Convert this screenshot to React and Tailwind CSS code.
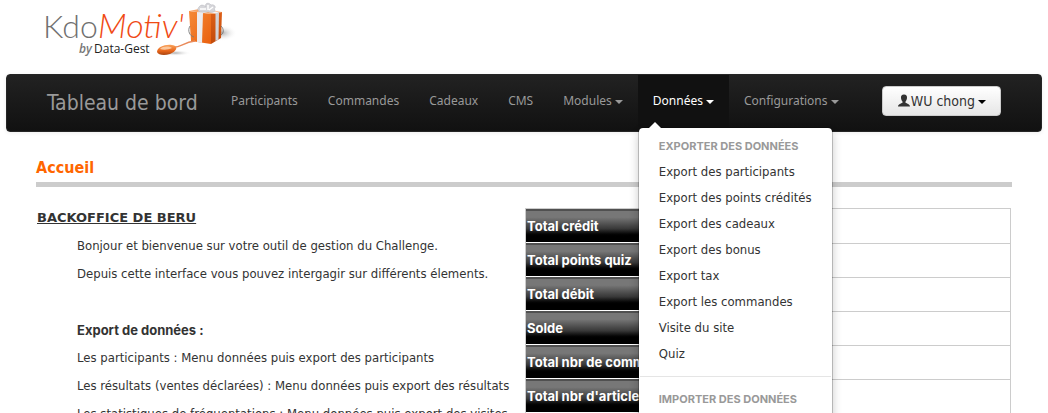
function Logo() {
  return (
    <svg width="240" height="62" viewBox="0 0 240 62" role="img" aria-label="KdoMotiv' by Data-Gest">
      <defs>
        <linearGradient id="front" x1="0" y1="0" x2="1" y2="1">
          <stop offset="0" stopColor="#f58a38" />
          <stop offset="1" stopColor="#e9600f" />
        </linearGradient>
        <linearGradient id="side" x1="0" y1="0" x2="0" y2="1">
          <stop offset="0" stopColor="#dd6018" />
          <stop offset="1" stopColor="#c24a0a" />
        </linearGradient>
        <linearGradient id="mouse" x1="0" y1="0" x2="0" y2="1">
          <stop offset="0" stopColor="#f9a35c" />
          <stop offset="0.6" stopColor="#e8651a" />
          <stop offset="1" stopColor="#a84410" />
        </linearGradient>
        <radialGradient id="shade">
          <stop offset="0" stopColor="#8a8a8a" stopOpacity="0.7" />
          <stop offset="1" stopColor="#ffffff" stopOpacity="0" />
        </radialGradient>
      </defs>
      <text x="43" y="38" fontSize="32" fontWeight="300" fill="#707070" className="font-['Lato',sans-serif]">Kdo</text>
      <text x="98" y="38" fontSize="34" fontWeight="300" fontStyle="italic" fill="#f04a14" className="font-['Lato',sans-serif]">Motiv'</text>
      <text x="79" y="53" fontSize="12" fontStyle="italic" fontWeight="600" fill="#777" className="font-['Open_Sans',sans-serif]">by</text>
      <text x="94" y="53" fontSize="12" fontWeight="500" fill="#222" className="font-['Open_Sans',sans-serif]">Data-Gest</text>
      <ellipse cx="222" cy="33" rx="15" ry="8" fill="url(#shade)" />
      <ellipse cx="175" cy="53" rx="16" ry="3" fill="url(#shade)" />
      <path d="M189 11 L211 14 L211 44 L191 41 Z" fill="url(#front)" />
      <path d="M211 14 L222 12 L221 38 L211 44 Z" fill="url(#side)" />
      <path d="M189 11 L199 9 L222 12 L211 14 Z" fill="#f7a468" />
      <path d="M197 12 L203 13 L202 43 L197 42 Z" fill="#ececef" />
      <path d="M215.500 13.200 L219 12.500 L218.500 39.500 L215.500 41 Z" fill="#d2d2d6" />
      <path d="M197 12 L208 9.500 L219 12.500 L215.500 13.500 L208 12 L203 13.200 Z" fill="#f4f4f6" />
      <path d="M205 12 C199 13 196 10 199 7 C201 4 204 5 206 7 C204 3 209 2 211 5 C214 4 217 7 214 9 C217 11 213 13 209 12 Z" fill="#d6d6da" stroke="#b4b4ba" strokeWidth="0.5" />
      <path d="M200 9 L206 9 M208 5 L208 10 M213 7 L209 10" stroke="#ffffff" strokeWidth="1.500" fill="none" />
      <path d="M190 26 C187 31 190 36 194 37 M221 26 C224 29 224 33 221 35" fill="none" stroke="#777" strokeWidth="0.9" />
      <path d="M171 47 C181 49 182 42 195 41" fill="none" stroke="#e98a5a" strokeWidth="1.300" />
      <path d="M157 52 C157 47 165 44 172 45 C179 46 177 51 170 54 C164 56 158 55 157 52 Z" fill="url(#mouse)" />
      <path d="M160 49 C163 46 169 46 172 48 C168 50 163 50 160 49 Z" fill="#fbc79c" />
    </svg>
  );
}

function Caret() {
  return <span className="ml-[3px] inline-block border-x-4 border-t-4 border-x-transparent border-t-current align-middle" />;
}

function UserIcon() {
  return (
    <svg width="14" height="14" viewBox="0 0 14 14" fill="#333" aria-hidden="true">
      <path d="M7 0.500 C9.300 0.500 10.200 2 10 4 C9.900 5.500 9.200 6.800 8.500 7.600 L8.500 8.800 C10 9.700 12.700 10 13 12.500 L1 12.500 C1.300 10 4 9.700 5.500 8.800 L5.500 7.600 C4.800 6.800 4.100 5.500 4 4 C3.800 2 4.700 0.500 7 0.500 Z" />
    </svg>
  );
}

const navItems = [
  { label: 'Participants' },
  { label: 'Commandes' },
  { label: 'Cadeaux' },
  { label: 'CMS' },
  { label: 'Modules', menu: true },
  { label: 'Données', menu: true, active: true },
  { label: 'Configurations', menu: true },
];

const exports = [
  'Export des participants',
  'Export des points crédités',
  'Export des cadeaux',
  'Export des bonus',
  'Export tax',
  'Export les commandes',
  'Visite du site',
  'Quiz',
];

const totals = [
  'Total crédit',
  'Total points quiz',
  'Total débit',
  'Solde',
  'Total nbr de commandes',
  "Total nbr d'articles",
];

function MenuHeading({ children }) {
  return (
    <li className="px-5 text-[11px] leading-[26px] font-bold text-[#999] uppercase font-['Inter',sans-serif]">{children}</li>
  );
}

function DataMenu() {
  return (
    <div className="absolute top-[52px] left-0 z-10 rounded-[5px] border border-black/20 bg-white bg-clip-padding py-[5px] whitespace-nowrap text-[#333] shadow-[0_5px_10px_rgba(0,0,0,0.2)]">
      <span className="absolute -top-1.5 left-2.5 border-x-[6px] border-b-[6px] border-x-transparent border-b-white" />
      <ul>
        <MenuHeading>Exporter des données</MenuHeading>
        {exports.map((label) => (
          <li key={label}>
            <a href="#" className="block px-5 leading-[26px]">{label}</a>
          </li>
        ))}
        <li className="mx-px my-[9px] h-px bg-[#e5e5e5]" role="separator" />
        <MenuHeading>Importer des données</MenuHeading>
      </ul>
    </div>
  );
}

export default function App() {
  return (
    <div className="h-screen overflow-hidden bg-white text-[13px] leading-[18px] text-[#333] font-['DejaVu_Sans_Condensed','DejaVu_Sans',sans-serif]">
      <header className="h-[74px]">
        <Logo />
      </header>

      <nav className="mx-1.5 flex h-[58px] items-start rounded border border-[#252525] bg-linear-to-b from-[#222] to-[#111] pl-10 text-[#999] shadow-[0_1px_4px_rgba(0,0,0,0.07)]">
        <a href="#" className="w-[169px] text-[21px] leading-[56px] whitespace-nowrap">Tableau de bord</a>
        <ul className="flex">
          {navItems.map(({ label, menu, active }) => (
            <li key={label} className="relative">
              <a
                href="#"
                className={
                  active
                    ? "block bg-[#111] px-[15px] text-[12px] leading-[52px] whitespace-nowrap text-white font-['Noto_Sans',sans-serif]"
                    : "block px-[15px] text-[12px] leading-[52px] whitespace-nowrap font-['Noto_Sans',sans-serif]"
                }
              >
                {label}
                {menu && <Caret />}
              </a>
              {active && <DataMenu />}
            </li>
          ))}
        </ul>
        <button
          type="button"
          className="mt-[11px] mr-10 ml-auto flex h-[30px] items-center rounded border border-[#ccc] bg-linear-to-b from-white to-[#e6e6e6] px-3.5 text-[14px] whitespace-nowrap text-[#333]"
        >
          <UserIcon />
          WU chong
          <span className="text-black">
            <Caret />
          </span>
        </button>
      </nav>

      <main className="px-9 pt-[26px]">
        <h1 className="border-b-[5px] border-[#ccc] pb-1 text-[16px] leading-5 font-bold text-[#f60]">Accueil</h1>
        <div className="mt-[21px] grid grid-cols-2">
          <section className="space-y-2.5 pt-px whitespace-nowrap">
            <h2 className="px-px font-bold underline font-['DejaVu_Sans',sans-serif]">BACKOFFICE DE BERU</h2>
            <div className="space-y-2.5 pl-[41px]">
              <p>Bonjour et bienvenue sur votre outil de gestion du Challenge.</p>
              <p>Depuis cette interface vous pouvez intergagir sur différents élements.</p>
              <p className="pt-7 font-bold font-['Inter',sans-serif]">Export de données :</p>
              <p>Les participants : Menu données puis export des participants</p>
              <p>Les résultats (ventes déclarées) : Menu données puis export des résultats</p>
              <p>Les statistiques de fréquentations : Menu données puis export des visites</p>
            </div>
          </section>
          <table className="mx-px border-separate border-spacing-0 self-start border border-[#ccc]">
            <tbody>
              {totals.map((label) => (
                <tr key={label} className="group h-[34px]">
                  <th
                    scope="row"
                    className="w-2/5 border-b border-white bg-linear-to-b from-[#777] from-25% via-[#383838] via-60% to-black to-85% pl-px text-left font-bold whitespace-nowrap text-white shadow-[inset_0_2px_0_#505050] font-['Inter',sans-serif]"
                  >
                    {label}
                  </th>
                  <td className="border-t border-[#ccc] group-first:border-t-0" />
                </tr>
              ))}
            </tbody>
          </table>
        </div>
      </main>
    </div>
  );
}
